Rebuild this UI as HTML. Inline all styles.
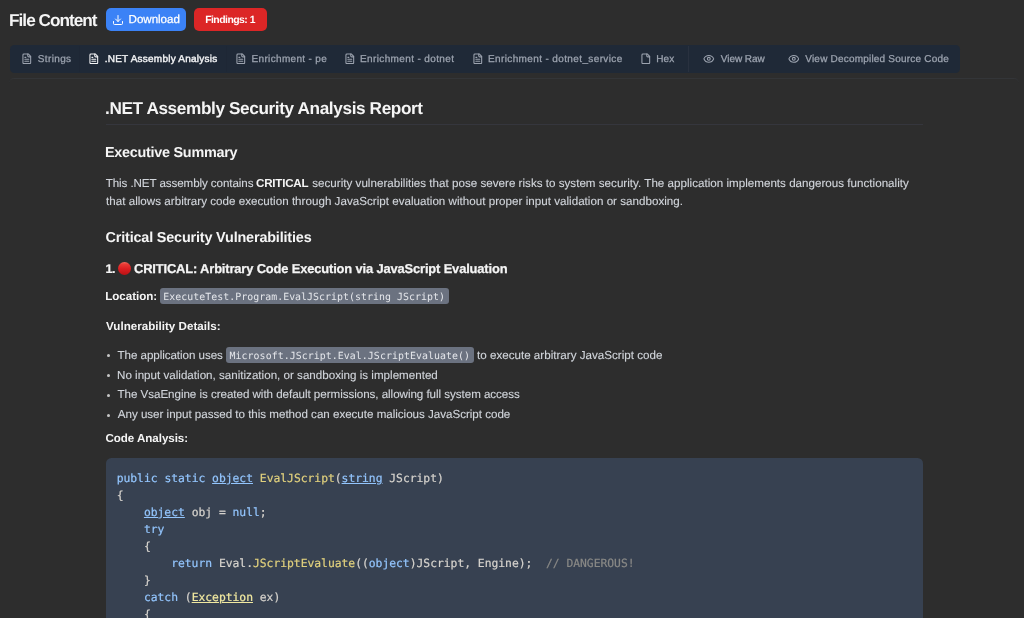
<!DOCTYPE html>
<html lang="en">
<head>
<meta charset="utf-8">
<title>File Content</title>
<style>
*{box-sizing:border-box;margin:0;padding:0}
html,body{width:1024px;height:618px;overflow:hidden;background:#2d2d2d}
body{font-family:"Liberation Sans", Arial, sans-serif;color:#d1d5db;position:relative;text-rendering:geometricPrecision}
.t{position:absolute;white-space:pre;margin:0;list-style:none}
.ico{position:absolute;display:block}
.ico svg{display:block;width:100%;height:100%}
header,nav,main,article,ul,li,pre,h3,p{display:block;list-style:none;font-size:0;line-height:0}
#app{position:absolute;left:0;top:0;width:1024px;height:618px;overflow:hidden;will-change:transform}
.btn{position:absolute;top:8px;height:22.75px;border-radius:5px}
.tabs{position:absolute;left:9.5px;top:44.75px;width:950.5px;height:28.6px;background:#1f2937;border-radius:4.5px}
.tabon{position:absolute;left:79px;top:46px;width:148px;height:26px;border-left:1px solid #1e2735;border-right:1px solid #1e2735}
.sep{position:absolute;left:688.1px;top:45.6px;width:1px;height:26.8px;background:#29313f}
.panel{position:absolute;left:9.4px;top:78.3px;width:1009.3px;height:560px;border-top:1.6px solid #333538;border-radius:5px;background:#2d2d2d}
.hr{position:absolute;left:105.5px;top:124.1px;width:817.5px;height:1.2px;background:#35363d}
.cbox{position:absolute;background:#6b7280;border-radius:3px}
.pre{position:absolute;left:105.5px;top:458.1px;width:817px;height:200px;background:#374151;border-radius:5.5px}
code,pre{font-family:"DejaVu Sans Mono", "Liberation Mono", monospace}
.dot{position:absolute;border-radius:50%}
.k{color:#93c5fd}.u{text-decoration:underline;text-underline-offset:1px;text-decoration-thickness:1px}.f{color:#e0d07d}.e{color:#f1e9a0}.c{color:#898986}
</style>
</head>
<body>
<div id="app">
<header>
<h1 class="t" id="title" style="left:9.00px;top:8.00px;font-size:17.2px;line-height:24px;font-weight:700;color:#f5f5f5;letter-spacing:-0.973px">File Content</h1>
<div class="action"><span class="btn" style="left:106px;width:79.5px;background:#3b82f6"></span>
<span class="ico" style="left:111.6px;top:13.8px;width:12px;height:12px;color:#fff"><svg viewBox="0 0 24 24" fill="none" stroke="currentColor" stroke-width="2" stroke-linecap="round" stroke-linejoin="round"><path d="M21 15v4a2 2 0 0 1-2 2H5a2 2 0 0 1-2-2v-4"/><path d="M7 10l5 5 5-5"/><path d="M12 15V3"/></svg></span>
<span class="t" id="dl" style="left:128.55px;top:12.00px;font-size:11.6px;line-height:16px;font-weight:400;color:#ffffff;letter-spacing:-0.036px;-webkit-text-stroke-width:0.25px">Download</span></div>
<div class="action"><span class="btn" style="left:194px;width:72.7px;background:#dc2626"></span>
<span class="t" id="fd" style="left:205.15px;top:13.00px;font-size:10.4px;line-height:15px;font-weight:700;color:#ffffff;letter-spacing:-0.510px">Findings: 1</span></div>
</header>
<nav><div class="tabs"></div><div class="tabon"></div><div class="sep"></div>
<div class="tab"><span class="ico" style="left:21.4px;top:52.7px;width:11.6px;height:11.6px;color:#9ca3af"><svg viewBox="0 0 24 24" fill="none" stroke="currentColor" stroke-width="2.2" stroke-linecap="round" stroke-linejoin="round"><path d="M15 2H6a2 2 0 0 0-2 2v16a2 2 0 0 0 2 2h12a2 2 0 0 0 2-2V7Z"/><path d="M14 2v4a2 2 0 0 0 2 2h4"/><path d="M10 9H8"/><path d="M16 13H8"/><path d="M16 17H8"/></svg></span><span class="t" id="tb1" style="left:37.75px;top:52.00px;font-size:10.0px;line-height:15px;font-weight:400;color:#9ca3af;letter-spacing:0.375px;-webkit-text-stroke-width:0.28px">Strings</span></div>
<div class="tab"><span class="ico" style="left:88.4px;top:52.7px;width:11.6px;height:11.6px;color:#f3f4f6"><svg viewBox="0 0 24 24" fill="none" stroke="currentColor" stroke-width="2.2" stroke-linecap="round" stroke-linejoin="round"><path d="M15 2H6a2 2 0 0 0-2 2v16a2 2 0 0 0 2 2h12a2 2 0 0 0 2-2V7Z"/><path d="M14 2v4a2 2 0 0 0 2 2h4"/><path d="M10 9H8"/><path d="M16 13H8"/><path d="M16 17H8"/></svg></span><span class="t" id="tb2" style="left:104.75px;top:52.00px;font-size:10.0px;line-height:15px;font-weight:400;color:#f3f4f6;letter-spacing:0.226px;-webkit-text-stroke-width:0.4px">.NET Assembly Analysis</span></div>
<div class="tab"><span class="ico" style="left:234.9px;top:52.7px;width:11.6px;height:11.6px;color:#9ca3af"><svg viewBox="0 0 24 24" fill="none" stroke="currentColor" stroke-width="2.2" stroke-linecap="round" stroke-linejoin="round"><path d="M15 2H6a2 2 0 0 0-2 2v16a2 2 0 0 0 2 2h12a2 2 0 0 0 2-2V7Z"/><path d="M14 2v4a2 2 0 0 0 2 2h4"/><path d="M10 9H8"/><path d="M16 13H8"/><path d="M16 17H8"/></svg></span><span class="t" id="tb3" style="left:251.50px;top:52.00px;font-size:10.0px;line-height:15px;font-weight:400;color:#9ca3af;letter-spacing:0.339px;-webkit-text-stroke-width:0.28px">Enrichment - pe</span></div>
<div class="tab"><span class="ico" style="left:344.1px;top:52.7px;width:11.6px;height:11.6px;color:#9ca3af"><svg viewBox="0 0 24 24" fill="none" stroke="currentColor" stroke-width="2.2" stroke-linecap="round" stroke-linejoin="round"><path d="M15 2H6a2 2 0 0 0-2 2v16a2 2 0 0 0 2 2h12a2 2 0 0 0 2-2V7Z"/><path d="M14 2v4a2 2 0 0 0 2 2h4"/><path d="M10 9H8"/><path d="M16 13H8"/><path d="M16 17H8"/></svg></span><span class="t" id="tb4" style="left:360.00px;top:52.00px;font-size:10.0px;line-height:15px;font-weight:400;color:#9ca3af;letter-spacing:0.375px;-webkit-text-stroke-width:0.28px">Enrichment - dotnet</span></div>
<div class="tab"><span class="ico" style="left:471.9px;top:52.7px;width:11.6px;height:11.6px;color:#9ca3af"><svg viewBox="0 0 24 24" fill="none" stroke="currentColor" stroke-width="2.2" stroke-linecap="round" stroke-linejoin="round"><path d="M15 2H6a2 2 0 0 0-2 2v16a2 2 0 0 0 2 2h12a2 2 0 0 0 2-2V7Z"/><path d="M14 2v4a2 2 0 0 0 2 2h4"/><path d="M10 9H8"/><path d="M16 13H8"/><path d="M16 17H8"/></svg></span><span class="t" id="tb5" style="left:488.00px;top:52.00px;font-size:10.0px;line-height:15px;font-weight:400;color:#9ca3af;letter-spacing:0.375px;-webkit-text-stroke-width:0.28px">Enrichment - dotnet_service</span></div>
<div class="tab"><span class="ico" style="left:639.6px;top:52.7px;width:11.6px;height:11.6px;color:#9ca3af"><svg viewBox="0 0 24 24" fill="none" stroke="currentColor" stroke-width="2.2" stroke-linecap="round" stroke-linejoin="round"><path d="M15 2H6a2 2 0 0 0-2 2v16a2 2 0 0 0 2 2h12a2 2 0 0 0 2-2V7Z"/><path d="M14 2v4a2 2 0 0 0 2 2h4"/></svg></span><span class="t" id="tb6" style="left:656.15px;top:52.00px;font-size:10.0px;line-height:15px;font-weight:400;color:#9ca3af;letter-spacing:0.125px;-webkit-text-stroke-width:0.28px">Hex</span></div>
<div class="tab"><span class="ico" style="left:703.4px;top:52.7px;width:11.6px;height:11.6px;color:#9ca3af"><svg viewBox="0 0 24 24" fill="none" stroke="currentColor" stroke-width="2.2" stroke-linecap="round" stroke-linejoin="round"><path d="M2.06 12.35a1 1 0 0 1 0-.7 10.75 10.75 0 0 1 19.88 0 1 1 0 0 1 0 .7 10.75 10.75 0 0 1-19.88 0"/><circle cx="12" cy="12" r="3"/></svg></span><span class="t" id="tb7" style="left:720.75px;top:52.00px;font-size:10.0px;line-height:15px;font-weight:400;color:#9ca3af;letter-spacing:-0.036px;-webkit-text-stroke-width:0.28px">View Raw</span></div>
<div class="tab"><span class="ico" style="left:787.9px;top:52.7px;width:11.6px;height:11.6px;color:#9ca3af"><svg viewBox="0 0 24 24" fill="none" stroke="currentColor" stroke-width="2.2" stroke-linecap="round" stroke-linejoin="round"><path d="M2.06 12.35a1 1 0 0 1 0-.7 10.75 10.75 0 0 1 19.88 0 1 1 0 0 1 0 .7 10.75 10.75 0 0 1-19.88 0"/><circle cx="12" cy="12" r="3"/></svg></span><span class="t" id="tb8" style="left:805.25px;top:52.00px;font-size:10.0px;line-height:15px;font-weight:400;color:#9ca3af;letter-spacing:0.202px;-webkit-text-stroke-width:0.28px">View Decompiled Source Code</span></div>
</nav>
<main><div class="panel"></div><article>
<h1 class="t" id="h1" style="left:105.00px;top:96.00px;font-size:17.2px;line-height:24px;font-weight:700;color:#f5f5f5;letter-spacing:-0.378px">.NET Assembly Security Analysis Report</h1>
<div class="hr"></div>
<h2 class="t" id="h2a" style="left:105.00px;top:143.00px;font-size:14.4px;line-height:20px;font-weight:700;color:#f5f5f5;letter-spacing:-0.266px">Executive Summary</h2>
<p>
<span class="t" id="p1a1" style="left:105.75px;top:176.00px;font-size:11.6px;line-height:16px;font-weight:400;color:#d1d5db;letter-spacing:-0.086px;-webkit-text-stroke-width:0.12px">This .NET assembly contains </span>
<b class="t" id="p1a2" style="left:256.00px;top:176.00px;font-size:11.6px;line-height:16px;font-weight:700;color:#f5f5f5;letter-spacing:-0.214px">CRITICAL</b>
<span class="t" id="p1a3" style="left:309.00px;top:176.00px;font-size:11.6px;line-height:16px;font-weight:400;color:#d1d5db;letter-spacing:0.019px;-webkit-text-stroke-width:0.12px"> security vulnerabilities that pose severe risks to system security. The application implements dangerous functionality</span>
</p>
<p class="t" id="p1b" style="left:106.00px;top:194.00px;font-size:11.6px;line-height:16px;font-weight:400;color:#d1d5db;letter-spacing:0.025px;-webkit-text-stroke-width:0.12px">that allows arbitrary code execution through JavaScript evaluation without proper input validation or sandboxing.</p>
<h2 class="t" id="h2b" style="left:105.50px;top:228.00px;font-size:14.4px;line-height:20px;font-weight:700;color:#f5f5f5;letter-spacing:-0.164px">Critical Security Vulnerabilities</h2>
<h3>
<span class="t" id="h3n" style="left:105.50px;top:260.00px;font-size:12.5px;line-height:18px;font-weight:700;color:#f5f5f5;letter-spacing:-0.550px;-webkit-text-stroke-width:0.2px">1.</span>
<span class="dot" style="left:118px;top:261.9px;width:12.9px;height:12.9px;background:linear-gradient(180deg,#f26a5e 0%,#e93a35 18%,#dc1f22 52%,#b91214 100%)"></span>
<span class="t" id="h3" style="left:134.00px;top:259.00px;font-size:12.9px;line-height:19px;font-weight:700;color:#f5f5f5;letter-spacing:-0.144px;-webkit-text-stroke-width:0.25px">CRITICAL: Arbitrary Code Execution via JavaScript Evaluation</span>
</h3>
<p>
<b class="t" id="loc" style="left:105.25px;top:289.00px;font-size:11.6px;line-height:16px;font-weight:700;color:#f5f5f5;letter-spacing:-0.031px">Location:</b>
<span class="cbox" style="left:159.5px;top:288.3px;width:289.3px;height:15.7px"></span>
<code class="t" id="loccode" style="left:163.25px;top:290.00px;font-size:9.9px;line-height:15px;font-weight:400;color:#e5e7eb;letter-spacing:0.049px">ExecuteTest.Program.EvalJScript(string JScript)</code>
</p>
<p class="t" id="vd" style="left:106.00px;top:319.00px;font-size:11.6px;line-height:16px;font-weight:700;color:#f5f5f5;letter-spacing:0.012px">Vulnerability Details:</p>
<ul>
<li>
<span class="dot" style="left:106.9px;top:354.3px;width:3px;height:3px;background:#c6c6c6"></span>
<span class="t" id="li1" style="left:117.50px;top:348.00px;font-size:11.6px;line-height:16px;font-weight:400;color:#d1d5db;letter-spacing:-0.053px;-webkit-text-stroke-width:0.12px">The application uses</span>
<span class="cbox" style="left:225.5px;top:347px;width:248px;height:16px"></span>
<code class="t" id="li1code" style="left:229.55px;top:349.00px;font-size:9.9px;line-height:15px;font-weight:400;color:#e5e7eb;letter-spacing:0.068px">Microsoft.JScript.Eval.JScriptEvaluate()</code>
<span class="t" id="li1b" style="left:477.00px;top:348.00px;font-size:11.6px;line-height:16px;font-weight:400;color:#d1d5db;letter-spacing:0.014px;-webkit-text-stroke-width:0.12px">to execute arbitrary JavaScript code</span>
</li>
<li>
<span class="dot" style="left:106.9px;top:374.0px;width:3px;height:3px;background:#c6c6c6"></span>
<span class="t" id="li2" style="left:117.00px;top:368.00px;font-size:11.6px;line-height:16px;font-weight:400;color:#d1d5db;letter-spacing:0.008px;-webkit-text-stroke-width:0.12px">No input validation, sanitization, or sandboxing is implemented</span>
</li>
<li>
<span class="dot" style="left:106.9px;top:393.9px;width:3px;height:3px;background:#c6c6c6"></span>
<span class="t" id="li3" style="left:117.50px;top:387.00px;font-size:11.6px;line-height:16px;font-weight:400;color:#d1d5db;letter-spacing:-0.039px;-webkit-text-stroke-width:0.12px">The VsaEngine is created with default permissions, allowing full system access</span>
</li>
<li>
<span class="dot" style="left:106.9px;top:413.6px;width:3px;height:3px;background:#c6c6c6"></span>
<span class="t" id="li4" style="left:117.75px;top:407.00px;font-size:11.6px;line-height:16px;font-weight:400;color:#d1d5db;letter-spacing:-0.017px;-webkit-text-stroke-width:0.12px">Any user input passed to this method can execute malicious JavaScript code</span>
</li>
</ul>
<p class="t" id="ca" style="left:105.50px;top:431.00px;font-size:11.6px;line-height:16px;font-weight:700;color:#f5f5f5;letter-spacing:-0.058px">Code Analysis:</p>
<div class="pre"></div>
<pre>
<code class="t" id="c1" style="left:116.67px;top:469.00px;font-size:11.35px;line-height:18px;font-weight:400;color:#d6d3cd;letter-spacing:-0.017px;-webkit-text-stroke-width:0.2px"><span class="k">public</span> <span class="k">static</span> <span class="k u">object</span> <span class="f">EvalJScript</span>(<span class="k u">string</span> JScript)</code>
<code class="t" id="c2" style="left:116.67px;top:486.00px;font-size:11.35px;line-height:18px;font-weight:400;color:#d6d3cd;letter-spacing:-0.017px;-webkit-text-stroke-width:0.2px">{</code>
<code class="t" id="c3" style="left:116.67px;top:503.00px;font-size:11.35px;line-height:18px;font-weight:400;color:#d6d3cd;letter-spacing:-0.017px;-webkit-text-stroke-width:0.2px">    <span class="k u">object</span> obj = <span class="k">null</span>;</code>
<code class="t" id="c4" style="left:116.67px;top:520.00px;font-size:11.35px;line-height:18px;font-weight:400;color:#d6d3cd;letter-spacing:-0.017px;-webkit-text-stroke-width:0.2px">    <span class="k">try</span></code>
<code class="t" id="c5" style="left:116.67px;top:537.00px;font-size:11.35px;line-height:18px;font-weight:400;color:#d6d3cd;letter-spacing:-0.017px;-webkit-text-stroke-width:0.2px">    {</code>
<code class="t" id="c6" style="left:116.67px;top:554.00px;font-size:11.35px;line-height:18px;font-weight:400;color:#d6d3cd;letter-spacing:-0.017px;-webkit-text-stroke-width:0.2px">        <span class="k">return</span> Eval.<span class="f">JScriptEvaluate</span>((<span class="k">object</span>)JScript, Engine);  <span class="c">// DANGEROUS!</span></code>
<code class="t" id="c7" style="left:116.67px;top:571.00px;font-size:11.35px;line-height:18px;font-weight:400;color:#d6d3cd;letter-spacing:-0.017px;-webkit-text-stroke-width:0.2px">    }</code>
<code class="t" id="c8" style="left:116.67px;top:588.00px;font-size:11.35px;line-height:18px;font-weight:400;color:#d6d3cd;letter-spacing:-0.017px;-webkit-text-stroke-width:0.2px">    <span class="k">catch</span> (<span class="e u">Exception</span> ex)</code>
<code class="t" id="c9" style="left:116.67px;top:605.00px;font-size:11.35px;line-height:18px;font-weight:400;color:#d6d3cd;letter-spacing:-0.017px;-webkit-text-stroke-width:0.2px">    {</code>
<code class="t" id="c10" style="left:116.67px;top:622.00px;font-size:11.35px;line-height:18px;font-weight:400;color:#d6d3cd;letter-spacing:-0.017px;-webkit-text-stroke-width:0.2px">        obj = ex.Message;</code>
</pre>
</article></main>
</div>
</body>
</html>
